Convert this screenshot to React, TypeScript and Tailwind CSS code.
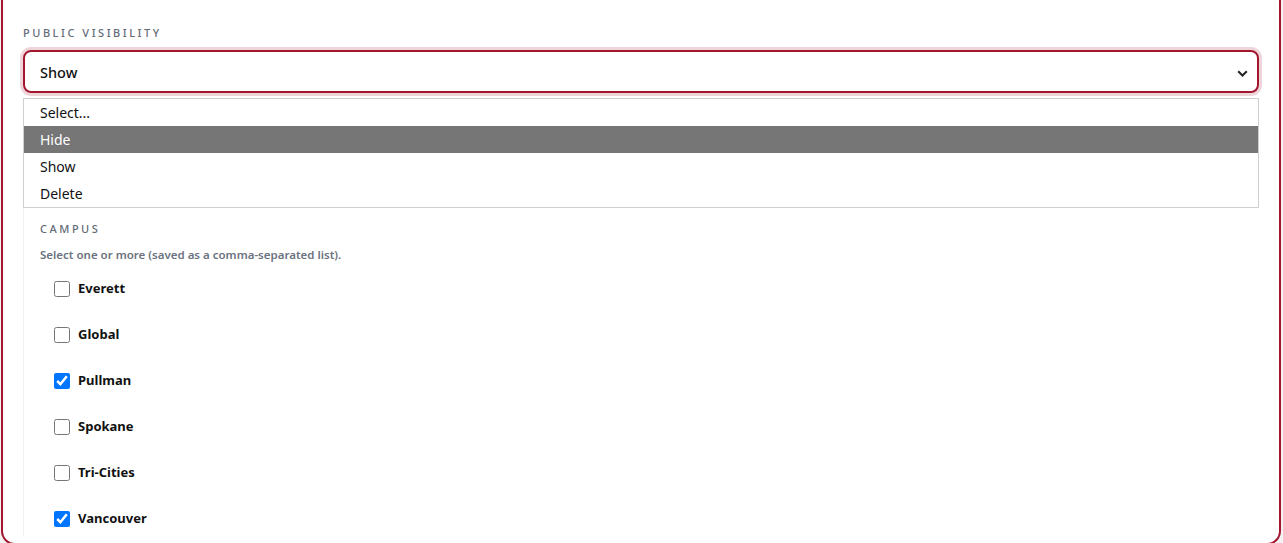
import { useState } from "react";

const visibilityOptions = ["Select...", "Hide", "Show", "Delete"];

const campuses = [
    { id: "everett", name: "Everett", checked: false },
    { id: "global", name: "Global", checked: false },
    { id: "pullman", name: "Pullman", checked: true },
    { id: "spokane", name: "Spokane", checked: false },
    { id: "tri-cities", name: "Tri-Cities", checked: false },
    { id: "vancouver", name: "Vancouver", checked: true },
];

const App = () => {
    const [selected, setSelected] = useState<string[]>(
        campuses.filter((c) => c.checked).map((c) => c.id)
    );

    const toggle = (id: string) =>
        setSelected((prev) =>
            prev.includes(id) ? prev.filter((x) => x !== id) : [...prev, id]
        );

    return (
        <div className="min-h-screen bg-[#f4f4f4] font-['Noto_Sans',sans-serif] overflow-hidden">
            <div className="ml-px w-[1280px] bg-white border-2 border-t-0 border-[#a3162e] rounded-b-[14px] px-5 pt-[25px] pb-[7px]">
                <p className="text-[11px] leading-4 tracking-[0.23em] uppercase text-[#646c78] font-medium">
                    Public visibility
                </p>

                {/* select, shown open */}
                <div className="relative mt-[9px]">
                    <div className="h-[43px] flex items-center justify-between pl-[15px] pr-[9px] border-2 border-[#a3162e] rounded-lg shadow-[0_0_0_3px_rgba(163,22,46,0.18)]">
                        <span className="pt-[3px] text-[14.5px] font-medium text-[#111]">Show</span>
                        <svg width="11" height="7" viewBox="0 0 11 7" fill="none" className="mt-[3px]">
                            <path d="M1.2 1.2L5.5 5.5L9.8 1.2" stroke="#222" strokeWidth="2" />
                        </svg>
                    </div>

                    <ul className="absolute left-0 right-0 top-full mt-[5px] z-10 bg-white border border-[#cfcfcf]">
                        {visibilityOptions.map((opt) => (
                            <li
                                key={opt}
                                className={`h-[27px] flex items-center pl-4 text-sm ${opt === "Hide"
                                    ? "bg-[#767676] text-white"
                                    : "text-[#111]"
                                    }`}>
                                {opt}
                            </li>
                        ))}
                    </ul>
                </div>

                <div className="mt-[5px] border-l border-[#f0f0f0] pl-4 pt-[123px] pb-[7px]">
                    <p className="text-[11px] leading-4 tracking-[0.23em] uppercase text-[#646c78] font-medium">
                        Campus
                    </p>
                    <p className="mt-[10px] text-[11.5px] leading-4 font-semibold text-[#6b7280]">
                        Select one or more (saved as a comma-separated list).
                    </p>

                    <div className="mt-4 pl-[14px] flex flex-col gap-[26px]">
                        {campuses.map((c) => (
                            <label key={c.id} className="h-5 flex items-center gap-2 cursor-pointer">
                                <input
                                    type="checkbox"
                                    className="m-0 w-4 h-4 accent-[#0075ff]"
                                    checked={selected.includes(c.id)}
                                    onChange={() => toggle(c.id)}
                                />
                                <span className="text-[13px] font-bold text-[#111]">{c.name}</span>
                            </label>
                        ))}
                    </div>
                </div>
            </div>
        </div>
    );
};

export default App;
